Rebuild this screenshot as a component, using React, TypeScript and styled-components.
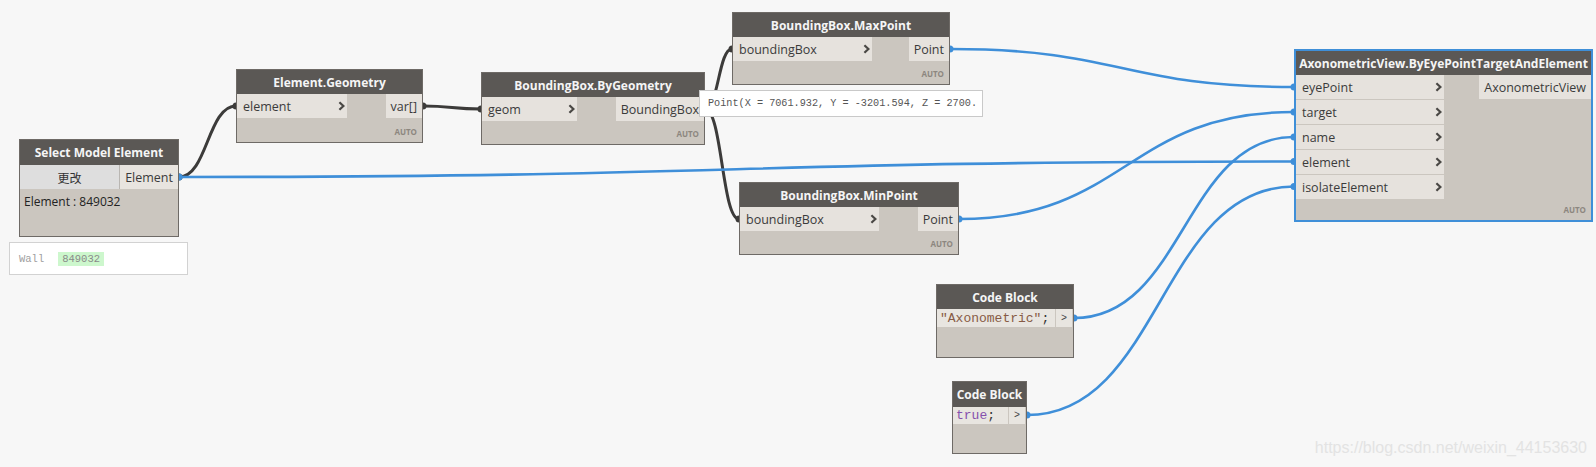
import { createGlobalStyle, styled } from "styled-components";

const GlobalStyle = createGlobalStyle`
  html, body {
    margin: 0;
    padding: 0;
    background: #f7f7f7;
  }
  body {
    font-family: "Open Sans", "Noto Sans", sans-serif;
  }
`;

const Canvas = styled.div`
  position: relative;
  width: 1596px;
  height: 467px;
  overflow: hidden;
  background: #f7f7f7;
`;

const WireLayer = styled.svg`
  position: absolute;
  left: 0;
  top: 0;
`;

const NodeBox = styled.div<{ $x: number; $y: number; $w: number; $h: number; $selected?: boolean }>`
  position: absolute;
  left: ${(p) => p.$x}px;
  top: ${(p) => p.$y}px;
  width: ${(p) => p.$w}px;
  height: ${(p) => p.$h}px;
  box-sizing: border-box;
  display: flex;
  flex-direction: column;
  background: #cbc6bf;
  border: ${(p) => (p.$selected ? "2px solid #3f8fd8" : "1px solid #6e6a66")};
`;

const Header = styled.div<{ $h: number }>`
  flex: none;
  height: ${(p) => p.$h}px;
  background: #5b5855;
  color: #f5f5f5;
  font-family: "Open Sans", sans-serif;
  font-weight: 700;
  font-size: 12px;
  display: flex;
  align-items: center;
  justify-content: center;
  white-space: nowrap;
`;

const Body = styled.div`
  display: flex;
  justify-content: space-between;
  align-items: flex-start;
`;

const InputList = styled.div<{ $w: number }>`
  width: ${(p) => p.$w}px;
  display: flex;
  flex-direction: column;
  gap: 1px;
`;

const OutputList = styled.div`
  display: flex;
  flex-direction: column;
  gap: 1px;
`;

const PortRow = styled.div<{ $out?: boolean }>`
  height: 24px;
  box-sizing: border-box;
  display: flex;
  align-items: center;
  justify-content: ${(p) => (p.$out ? "flex-end" : "space-between")};
  padding: ${(p) => (p.$out ? "0 5px" : "0 2px 0 6px")};
  background: #e6e2dd;
  color: #3b3b3b;
  font-size: 12.5px;
  white-space: nowrap;
`;

const Footer = styled.div`
  flex: 1;
  display: flex;
  align-items: flex-end;
  justify-content: flex-end;
  padding: 0 5px 5px;
  font-size: 8px;
  font-weight: 700;
  color: #8d877f;
`;

const Chevron = () => (
  <svg width="7" height="10" viewBox="0 0 7 10">
    <path d="M1.4 1.2 L5.4 5 L1.4 8.8" stroke="#4a4845" strokeWidth="2.2" fill="none" />
  </svg>
);

type NodeProps = {
  x: number;
  y: number;
  w: number;
  h: number;
  title: string;
  headerH?: number;
  inputs: string[];
  inputW: number;
  outputs: string[];
  selected?: boolean;
};

const FunctionNode = (props: NodeProps) => (
  <NodeBox $x={props.x} $y={props.y} $w={props.w} $h={props.h} $selected={props.selected}>
    <Header $h={props.headerH ?? 24}>{props.title}</Header>
    <Body>
      <InputList $w={props.inputW}>
        {props.inputs.map((name) => (
          <PortRow key={name}>
            {name}
            <Chevron />
          </PortRow>
        ))}
      </InputList>
      <OutputList>
        {props.outputs.map((name) => (
          <PortRow key={name} $out>
            {name}
          </PortRow>
        ))}
      </OutputList>
    </Body>
    <Footer>AUTO</Footer>
  </NodeBox>
);

/* Select Model Element */
const SelectRow = styled.div`
  display: flex;
  height: 24px;
`;

const ChangeButton = styled.div`
  width: 101px;
  box-sizing: border-box;
  background: #dedede;
  border-right: 1px solid #b9b6b2;
  display: flex;
  align-items: center;
  justify-content: center;
  font-family: "Noto Sans CJK SC", sans-serif;
  font-size: 12px;
  color: #333;
`;

const SelectOut = styled.div`
  flex: 1;
  background: #e8e4df;
  display: flex;
  align-items: center;
  justify-content: flex-end;
  padding: 0 5px;
  font-size: 12.5px;
  color: #3b3b3b;
`;

const SelectInfo = styled.div`
  padding: 4px 4px;
  font-size: 12px;
  color: #222;
`;

const Preview = styled.div`
  position: absolute;
  left: 9px;
  top: 242px;
  width: 179px;
  height: 33px;
  box-sizing: border-box;
  background: #ffffff;
  border: 1px solid #d2d2d2;
  display: flex;
  align-items: center;
  gap: 14px;
  padding-left: 9px;
  font-family: "Liberation Mono", monospace;
  font-size: 10.5px;
  color: #a0a0a0;
`;

const Highlight = styled.span`
  background: #cdf7cd;
  padding: 1px 4px;
  color: #8a8a8a;
`;

/* Code block */
const CodeRow = styled.div<{ $h: number }>`
  display: flex;
  gap: 1px;
  height: ${(p) => p.$h}px;
  padding-right: 1px;
`;

const CodeText = styled.div`
  flex: 1;
  background: #e8e5e0;
  display: flex;
  align-items: center;
  padding-left: 3px;
  font-family: "Liberation Mono", monospace;
  font-size: 13px;
  color: #333;
  white-space: nowrap;
  overflow: hidden;
`;

const CodeOut = styled.div`
  width: 16px;
  background: #e8e5e0;
  display: flex;
  align-items: center;
  justify-content: center;
  font-family: "Liberation Mono", monospace;
  font-size: 10px;
  color: #444;
`;

const Str = styled.span`
  color: #875b45;
`;

const Keyword = styled.span`
  color: #8550ad;
`;

const Tooltip = styled.div`
  position: absolute;
  left: 699px;
  top: 90px;
  width: 284px;
  height: 27px;
  box-sizing: border-box;
  background: #ffffff;
  border: 1px solid #c9c9c9;
  display: flex;
  align-items: center;
  padding-left: 8px;
  font-family: "Liberation Mono", monospace;
  font-size: 10.2px;
  color: #555;
  white-space: nowrap;
`;

const Watermark = styled.div`
  position: absolute;
  right: 9px;
  top: 439px;
  font-family: "Liberation Sans", Arial, sans-serif;
  font-size: 16px;
  color: #e3e3e3;
`;

type Wire = { x1: number; y1: number; x2: number; y2: number; blue?: boolean };

const wires: Wire[] = [
  { x1: 179, y1: 177, x2: 236, y2: 106 },
  { x1: 423, y1: 106, x2: 481, y2: 109 },
  { x1: 705, y1: 109, x2: 732, y2: 49 },
  { x1: 705, y1: 109, x2: 739, y2: 219 },
  { x1: 179, y1: 177, x2: 1294, y2: 161.5, blue: true },
  { x1: 950, y1: 49, x2: 1294, y2: 87, blue: true },
  { x1: 959, y1: 219, x2: 1294, y2: 112, blue: true },
  { x1: 1074, y1: 318, x2: 1294, y2: 137, blue: true },
  { x1: 1027, y1: 415, x2: 1294, y2: 186.5, blue: true },
];

const wirePath = (w: Wire) => {
  const d = Math.abs(w.x2 - w.x1) / 2;
  return `M${w.x1} ${w.y1} C${w.x1 + d} ${w.y1}, ${w.x2 - d} ${w.y2}, ${w.x2} ${w.y2}`;
};

export default function App() {
  return (
    <>
      <GlobalStyle />
      <Canvas>
        <WireLayer width="1596" height="467">
          {wires.map((w, i) => {
            const c = w.blue ? "#3f8fd9" : "#3c3b3a";
            return (
              <g key={i}>
                <path d={wirePath(w)} stroke={c} strokeWidth={w.blue ? 2.6 : 3} fill="none" />
                <circle cx={w.x1} cy={w.y1} r="3.5" fill={c} />
                <circle cx={w.x2} cy={w.y2} r="3.5" fill={c} />
              </g>
            );
          })}
        </WireLayer>

        <NodeBox $x={19} $y={139} $w={160} $h={98}>
          <Header $h={25}>Select Model Element</Header>
          <SelectRow>
            <ChangeButton>更改</ChangeButton>
            <SelectOut>Element</SelectOut>
          </SelectRow>
          <SelectInfo>Element : 849032</SelectInfo>
        </NodeBox>
        <Preview>
          <span>Wall</span>
          <Highlight>849032</Highlight>
        </Preview>

        <FunctionNode x={236} y={69} w={187} h={74} title="Element.Geometry" inputs={["element"]} inputW={110} outputs={["var[]"]} />
        <FunctionNode x={481} y={72} w={224} h={73} title="BoundingBox.ByGeometry" inputs={["geom"]} inputW={95} outputs={["BoundingBox"]} />
        <FunctionNode x={732} y={12} w={218} h={73} title="BoundingBox.MaxPoint" inputs={["boundingBox"]} inputW={139} outputs={["Point"]} />
        <FunctionNode x={739} y={182} w={220} h={73} title="BoundingBox.MinPoint" inputs={["boundingBox"]} inputW={139} outputs={["Point"]} />
        <FunctionNode
          x={1294}
          y={49}
          w={299}
          h={173}
          title="AxonometricView.ByEyePointTargetAndElement"
          inputs={["eyePoint", "target", "name", "element", "isolateElement"]}
          inputW={148}
          outputs={["AxonometricView"]}
          selected
        />

        <NodeBox $x={936} $y={284} $w={138} $h={74}>
          <Header $h={24}>Code Block</Header>
          <CodeRow $h={18}>
            <CodeText>
              <Str>"Axonometric"</Str>;
            </CodeText>
            <CodeOut>&gt;</CodeOut>
          </CodeRow>
        </NodeBox>

        <NodeBox $x={952} $y={381} $w={75} $h={73}>
          <Header $h={25}>Code Block</Header>
          <CodeRow $h={17}>
            <CodeText>
              <Keyword>true</Keyword>;
            </CodeText>
            <CodeOut>&gt;</CodeOut>
          </CodeRow>
        </NodeBox>

        <Tooltip>Point(X = 7061.932, Y = -3201.594, Z = 2700.</Tooltip>
        <Watermark>https://blog.csdn.net/weixin_44153630</Watermark>
      </Canvas>
    </>
  );
}
